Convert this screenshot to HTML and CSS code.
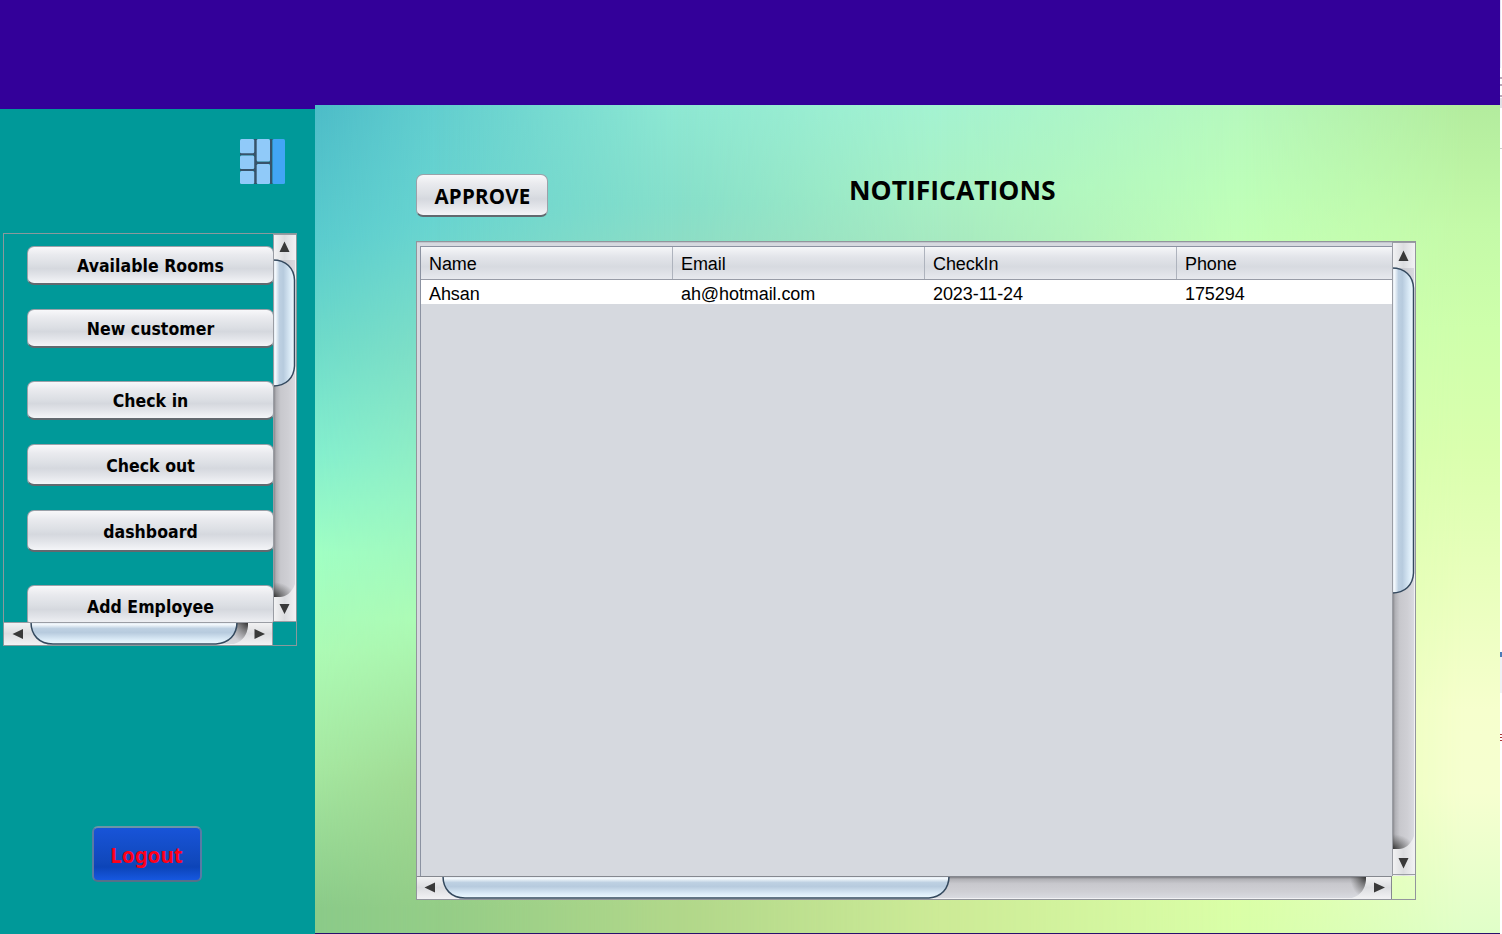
FILE: index.html
```html
<!DOCTYPE html>
<html lang="en">
<head>
<meta charset="utf-8">
<title>Notifications</title>
<link rel="stylesheet" href="styles.css">
</head>
<body>
<svg class="defs" width="0" height="0" aria-hidden="true">
  <defs>
    <linearGradient id="thumbV"><stop offset="0" stop-color="#dce6ef"/><stop offset=".12" stop-color="#f3f8fc"/><stop offset=".3" stop-color="#bdd0e2"/><stop offset=".48" stop-color="#b7cbde"/><stop offset=".8" stop-color="#dbebf7"/><stop offset="1" stop-color="#eefaff"/></linearGradient>
    <linearGradient id="thumbH" x2="0" y2="1"><stop offset="0" stop-color="#dce6ef"/><stop offset=".12" stop-color="#f3f8fc"/><stop offset=".3" stop-color="#bdd0e2"/><stop offset=".48" stop-color="#b7cbde"/><stop offset=".8" stop-color="#dbebf7"/><stop offset="1" stop-color="#eefaff"/></linearGradient>
    <linearGradient id="trackV"><stop offset="0" stop-color="#77777c"/><stop offset=".14" stop-color="#b0b0b5"/><stop offset=".35" stop-color="#c8c8cd"/><stop offset=".7" stop-color="#cfcfd4"/><stop offset="1" stop-color="#d9dae0"/></linearGradient>
    <linearGradient id="trackH" x2="0" y2="1"><stop offset="0" stop-color="#66666b"/><stop offset=".14" stop-color="#b0b0b5"/><stop offset=".35" stop-color="#c8c8cd"/><stop offset=".7" stop-color="#cfcfd4"/><stop offset="1" stop-color="#d9dae0"/></linearGradient>
    <linearGradient id="capV"><stop offset="0" stop-color="#f4f4f5"/><stop offset=".5" stop-color="#dcdde0"/><stop offset="1" stop-color="#f2f2f4"/></linearGradient>
    <linearGradient id="capH" x2="0" y2="1"><stop offset="0" stop-color="#f4f4f5"/><stop offset=".5" stop-color="#dcdde0"/><stop offset="1" stop-color="#f2f2f4"/></linearGradient>
    <radialGradient id="endV" cx="0" cy="1" r="1"><stop offset="0" stop-color="#2c2c2c" stop-opacity=".95"/><stop offset=".4" stop-color="#444" stop-opacity=".6"/><stop offset="1" stop-color="#555" stop-opacity="0"/></radialGradient>
    <radialGradient id="endH" cx="1" cy="0" r="1"><stop offset="0" stop-color="#2c2c2c" stop-opacity=".95"/><stop offset=".4" stop-color="#444" stop-opacity=".6"/><stop offset="1" stop-color="#555" stop-opacity="0"/></radialGradient>
  </defs>
</svg>
<div class="app">
  <aside class="side">
    <div class="side-top"></div>
    <svg class="logo" viewBox="0 0 45 45">
      <path d="M14 0H17V45H14ZM30 0H32.500V45H30ZM0 14H15V16.500H0ZM0 30H15V32H0ZM16 22.500H31V25H16Z" fill="#37536a"/>
      <g fill="#90caf9"><rect width="14.200" height="14.200" rx="1.500"/><rect y="16.500" width="14.200" height="13.500" rx="1.500"/><rect y="32" width="14.200" height="13" rx="1.500"/><rect x="16.700" width="13.300" height="22.500" rx="1.500"/><rect x="16.700" y="25" width="13.300" height="20" rx="1.500"/></g>
      <rect x="32.500" width="12.500" height="45" rx="1.500" fill="#42a5f5"/>
    </svg>
    <div class="menu-pane">
      <nav class="menu">
        <button class="btn item short"><span>Available Rooms</span></button>
        <button class="btn item short gap"><span>New customer</span></button>
        <button class="btn item short wide-gap"><span>Check in</span></button>
        <button class="btn item gap"><span>Check out</span></button>
        <button class="btn item gap"><span>dashboard</span></button>
        <button class="btn item wide-gap"><span>Add Employee</span></button>
      </nav>
      <svg class="bar" width="23" height="388" viewBox="0 0 23 388">
        <rect width="23" height="388" fill="url(#capV)"/>
        <path d="M0 26H22V350C19 359 12 363 7 363H0Z" fill="url(#trackV)"/>
        <path d="M0 348H22V350C19 359 12 363 7 363H0Z" fill="url(#endV)"/>
        <path d="M0 26C13 26 21 34 21.500 46V132C21 144 13 152 0 152Z" fill="url(#thumbV)"/>
        <path d="M0 26C13 26 21 34 21.500 46V132C21 144 13 152 0 152" fill="none" stroke="#34495e" stroke-width="1.500"/>
        <path d="M.5 0V388M0 .5H23M0 387.500H23" stroke="#9a9da4" fill="none"/>
        <path d="M11.500 7.500L16.500 18H6.500ZM6.500 370H16.500L11.500 380Z" fill="#393939"/>
      </svg>
      <svg class="bar" width="269" height="23" viewBox="0 0 269 23">
        <rect width="269" height="23" fill="url(#capH)"/>
        <path d="M27 0H244V4C243 13 239 19 230 22H40Z" fill="url(#trackH)"/>
        <path d="M226 0H244V4C243 13 239 19 230 22H226Z" fill="url(#endH)"/>
        <path d="M27 0C27 13 35 22 49 22H212C225 21 233 13 233 0Z" fill="url(#thumbH)"/>
        <path d="M27 0C27 13 35 22 49 22H212C225 21 233 13 233 0" fill="none" stroke="#34495e" stroke-width="1.500"/>
        <path d="M0 .5H269M268.500 0V23" stroke="#9a9da4" fill="none"/>
        <path d="M8.500 12L19 7V17ZM250.500 7L261 12L250.500 17Z" fill="#393939"/>
      </svg>
    </div>
    <button class="btn logout"><span>Logout</span></button>
  </aside>
  <main class="main">
    <div class="main-top"></div>
    <section class="canvas">
      <div class="shade s1"></div><div class="shade s2"></div><div class="shade s3"></div><div class="shade s4"></div><div class="shade s5"></div><div class="shade s6"></div>
      <div class="content">
        <div class="heading">
          <button class="btn approve"><span>APPROVE</span></button>
          <h1>NOTIFICATIONS</h1>
        </div>
        <div class="table-pane">
          <div class="view">
            <div class="row head"><div>Name</div><div>Email</div><div>CheckIn</div><div>Phone</div></div>
            <div class="row data"><div>Ahsan</div><div>ah@hotmail.com</div><div>2023-11-24</div><div>175294</div></div>
          </div>
          <svg class="bar" width="23" height="634" viewBox="0 0 23 634">
            <rect width="23" height="634" fill="url(#capV)"/>
            <path d="M0 26H22V594C19 603 12 607 7 607H0Z" fill="url(#trackV)"/>
            <path d="M0 592H22V594C19 603 12 607 7 607H0Z" fill="url(#endV)"/>
            <path d="M0 26C13 26 21 34 21.500 46V331C21 343 13 351 0 351Z" fill="url(#thumbV)"/>
            <path d="M0 26C13 26 21 34 21.500 46V331C21 343 13 351 0 351" fill="none" stroke="#34495e" stroke-width="1.500"/>
            <path d="M.5 0V634M0 .5H23M0 632.500H23" stroke="#9a9da4" fill="none"/>
            <path d="M11.500 8.500L16.500 19H6.500ZM6.500 616H16.500L11.500 626.500Z" fill="#393939"/>
          </svg>
          <svg class="bar" width="975" height="23" viewBox="0 0 975 23">
            <rect width="975" height="23" fill="url(#capH)"/>
            <path d="M26 0H949V4C948 13 944 19 935 22H40Z" fill="url(#trackH)"/>
            <path d="M933 0H949V4C948 13 944 19 935 22H933Z" fill="url(#endH)"/>
            <path d="M26 0C26 13 34 22 48 22H512C524 21 532 13 532 0Z" fill="url(#thumbH)"/>
            <path d="M26 0C26 13 34 22 48 22H512C524 21 532 13 532 0" fill="none" stroke="#34495e" stroke-width="1.500"/>
            <path d="M0 .5H975M974.500 0V23" stroke="#85888f" fill="none"/>
            <path d="M7.500 11.500L18 6.500V16.500ZM957 6.500L968 11.500L957 16.500Z" fill="#393939"/>
          </svg>
        </div>
      </div>
    </section>
  </main>
</div>
<svg class="edge" width="2" height="934" viewBox="0 0 2 934">
  <rect width="2" height="934" fill="#fff"/>
  <path d="M0 0H1V68H0Z" fill="#e8e4f4"/>
  <path d="M0 77H2V79H0ZM0 84H2V86H0ZM0 95H2V97H0Z" fill="#b9a9b9"/>
  <path d="M0 98H2V108H0Z" fill="#e1e1e6"/>
  <path d="M0 148H2V149H0Z" fill="#ccc"/>
  <path d="M0 652H2V657H0Z" fill="#4b7cb8"/>
  <path d="M0 657H2V693H0Z" fill="#f0f1f5"/>
  <path d="M0 734H2V735H0ZM0 737H2V738H0ZM0 740H2V741H0Z" fill="#a33"/>
</svg>
</body>
</html>
```
FILE: styles.css
```css
* { box-sizing: border-box; }
body { margin: 0; width: 1502px; height: 934px; display: flex; overflow: hidden; font-family: "Liberation Sans", sans-serif; color: #000; }
.defs { position: absolute; }
.app { width: 1500px; height: 934px; display: flex; }
.edge, .bar, .logo { display: block; }

.side { width: 315px; height: 934px; background: #009999; display: flex; flex-direction: column; align-items: flex-start; }
.side-top { width: 100%; height: 109px; background: #330099; flex: none; }
.logo { width: 45px; height: 45px; margin: 30px 0 49px 240px; flex: none; }

.btn {
  display: flex; align-items: center; justify-content: center; padding: 0;
  border: 1px solid #9ba1a9; border-bottom: 2px solid #62696f; border-radius: 7px;
  background: linear-gradient(#f8f8fa 0, #e9eaee 22%, #dcdfe4 48%, #d5d8de 60%, #e2e4e9 78%, #f4f5f8 100%);
  color: #000; font: bold 18px/20px "Open Sans", sans-serif; white-space: nowrap;
}

.menu-pane { width: 294px; height: 413px; margin-left: 3px; border: 1px solid #8a999c; display: grid; grid-template: 388px 23px / 269px 23px; flex: none; }
.menu { display: flex; flex-direction: column; padding: 12px 0 0 23px; overflow: hidden; }
.item { width: 247px; height: 42px; flex: none; padding-top: 2px; font: bold 17.5px/20px "DejaVu Sans Condensed", "DejaVu Sans", sans-serif; font-stretch: condensed; letter-spacing: .05px; }
.short { height: 39px; }
.gap { margin-top: 24px; }
.wide-gap { margin-top: 33px; }

.logout {
  width: 110px; height: 56px; margin: 180px 0 0 91.500px; border: 2px solid; border-color: #6c94a6 #597aa5 #54708a;
  border-radius: 6px; background: linear-gradient(#1854d8, #1048bc 65%, #0c44b8 75%, #1658e0);
  color: #ff0019; font: bold 20.500px/22px "Noto Sans", sans-serif; padding-top: 2px; flex: none;
}

.main { width: 1185px; height: 934px; }
.main-top { height: 105px; background: #330099; }
.canvas { height: 829px; display: grid; border-bottom: 1px solid #26106c; overflow: hidden; }
.canvas > * { grid-area: 1 / 1; min-width: 0; min-height: 0; }
.s1 { background: linear-gradient(#4dbcc8 0, #5accce 16%, #6ddaca 28%, #84efce 42%, #a0ffc4 54%, #adfbb5 66%, #a6e8a1 80%, #8bcb89 97%); }
.s2 { background: linear-gradient(#62cecf 0, #68d4d0 14%, #80dfc6 30%, #98f4c3 48%, #adfbb5 62%, #a0d891 82%, #94cd87 97%); -webkit-mask: linear-gradient(90deg, transparent 0, #000 120px); mask: linear-gradient(90deg, transparent 0, #000 120px); }
.s3 { background: linear-gradient(#8ee8d3 0, #86dfca 12%, #8eddc4 18%, #b0e8a8 60%, #b1d78a 97%); -webkit-mask: linear-gradient(90deg, transparent 120px, #000 360px); mask: linear-gradient(90deg, transparent 120px, #000 360px); }
.s4 { background: linear-gradient(#a5f3d1 0, #a9f1c5 10%, #a7e9c0 17%, #c9efa0 60%, #cdeb97 97%); -webkit-mask: linear-gradient(90deg, transparent 360px, #000 630px); mask: linear-gradient(90deg, transparent 360px, #000 630px); }
.s5 { background: linear-gradient(#b6f8bd 0, #bdfeb9 10%, #c3ffb6 17%, #daffaa 55%, #dcffa7 92%, #d9ffa8 100%); -webkit-mask: linear-gradient(90deg, transparent 630px, #000 930px); mask: linear-gradient(90deg, transparent 630px, #000 930px); }
.s6 { background: linear-gradient(#b3ec9e 0, #c4faa8 15%, #ceffab 27%, #daffae 42%, #e9ffbd 58%, #f6ffcd 73%, #f6ffd0 83%, #e0ffc8 100%); -webkit-mask: linear-gradient(90deg, transparent 930px, #000 1150px); mask: linear-gradient(90deg, transparent 930px, #000 1150px); }

.content { position: relative; padding: 69px 84px 0 101px; }
.heading { display: flex; align-items: flex-start; height: 67px; }
.approve { width: 132px; height: 43px; font-size: 20.500px; padding: 2px 0 0 1px; }
.approve span { letter-spacing: .2px; }
h1 { margin: -1px 0 0 301px; font: bold 26.500px/34px "Open Sans", sans-serif; letter-spacing: 0; white-space: nowrap; }

.table-pane { width: 1000px; height: 659px; border: 1px solid #92959c; display: grid; grid-template: 634px 23px / 975px 23px; }
.view { background: #d6d9df; padding: 4px 0 0 3px; border-top: 1px solid #c1c5cd; overflow: hidden; position: relative; }
.view::before { content: ""; position: absolute; left: 3px; top: 3px; right: 0; bottom: 0; border: 1px solid #8b92a1; border-width: 1px 0 0 1px; }
.row { display: grid; grid-template-columns: 253px 252px 252px 215px; font-size: 18px; letter-spacing: -.08px; }
.row div { padding-left: 8px; border-right: 1px solid transparent; white-space: nowrap; }
.row div:first-child { padding-left: 9px; }
.head { height: 33px; line-height: 34px; background: linear-gradient(#f6f7f9 0, #e3e5ea 30%, #d7dae0 62%, #e7e9ee 100%); border-bottom: 1px solid #989ca7; }
.head div { border-right-color: #aeb3bd; height: 32px; }
.head div:last-child { border-right: 0; }
.data { height: 24px; line-height: 28px; background: #fff; }
```
